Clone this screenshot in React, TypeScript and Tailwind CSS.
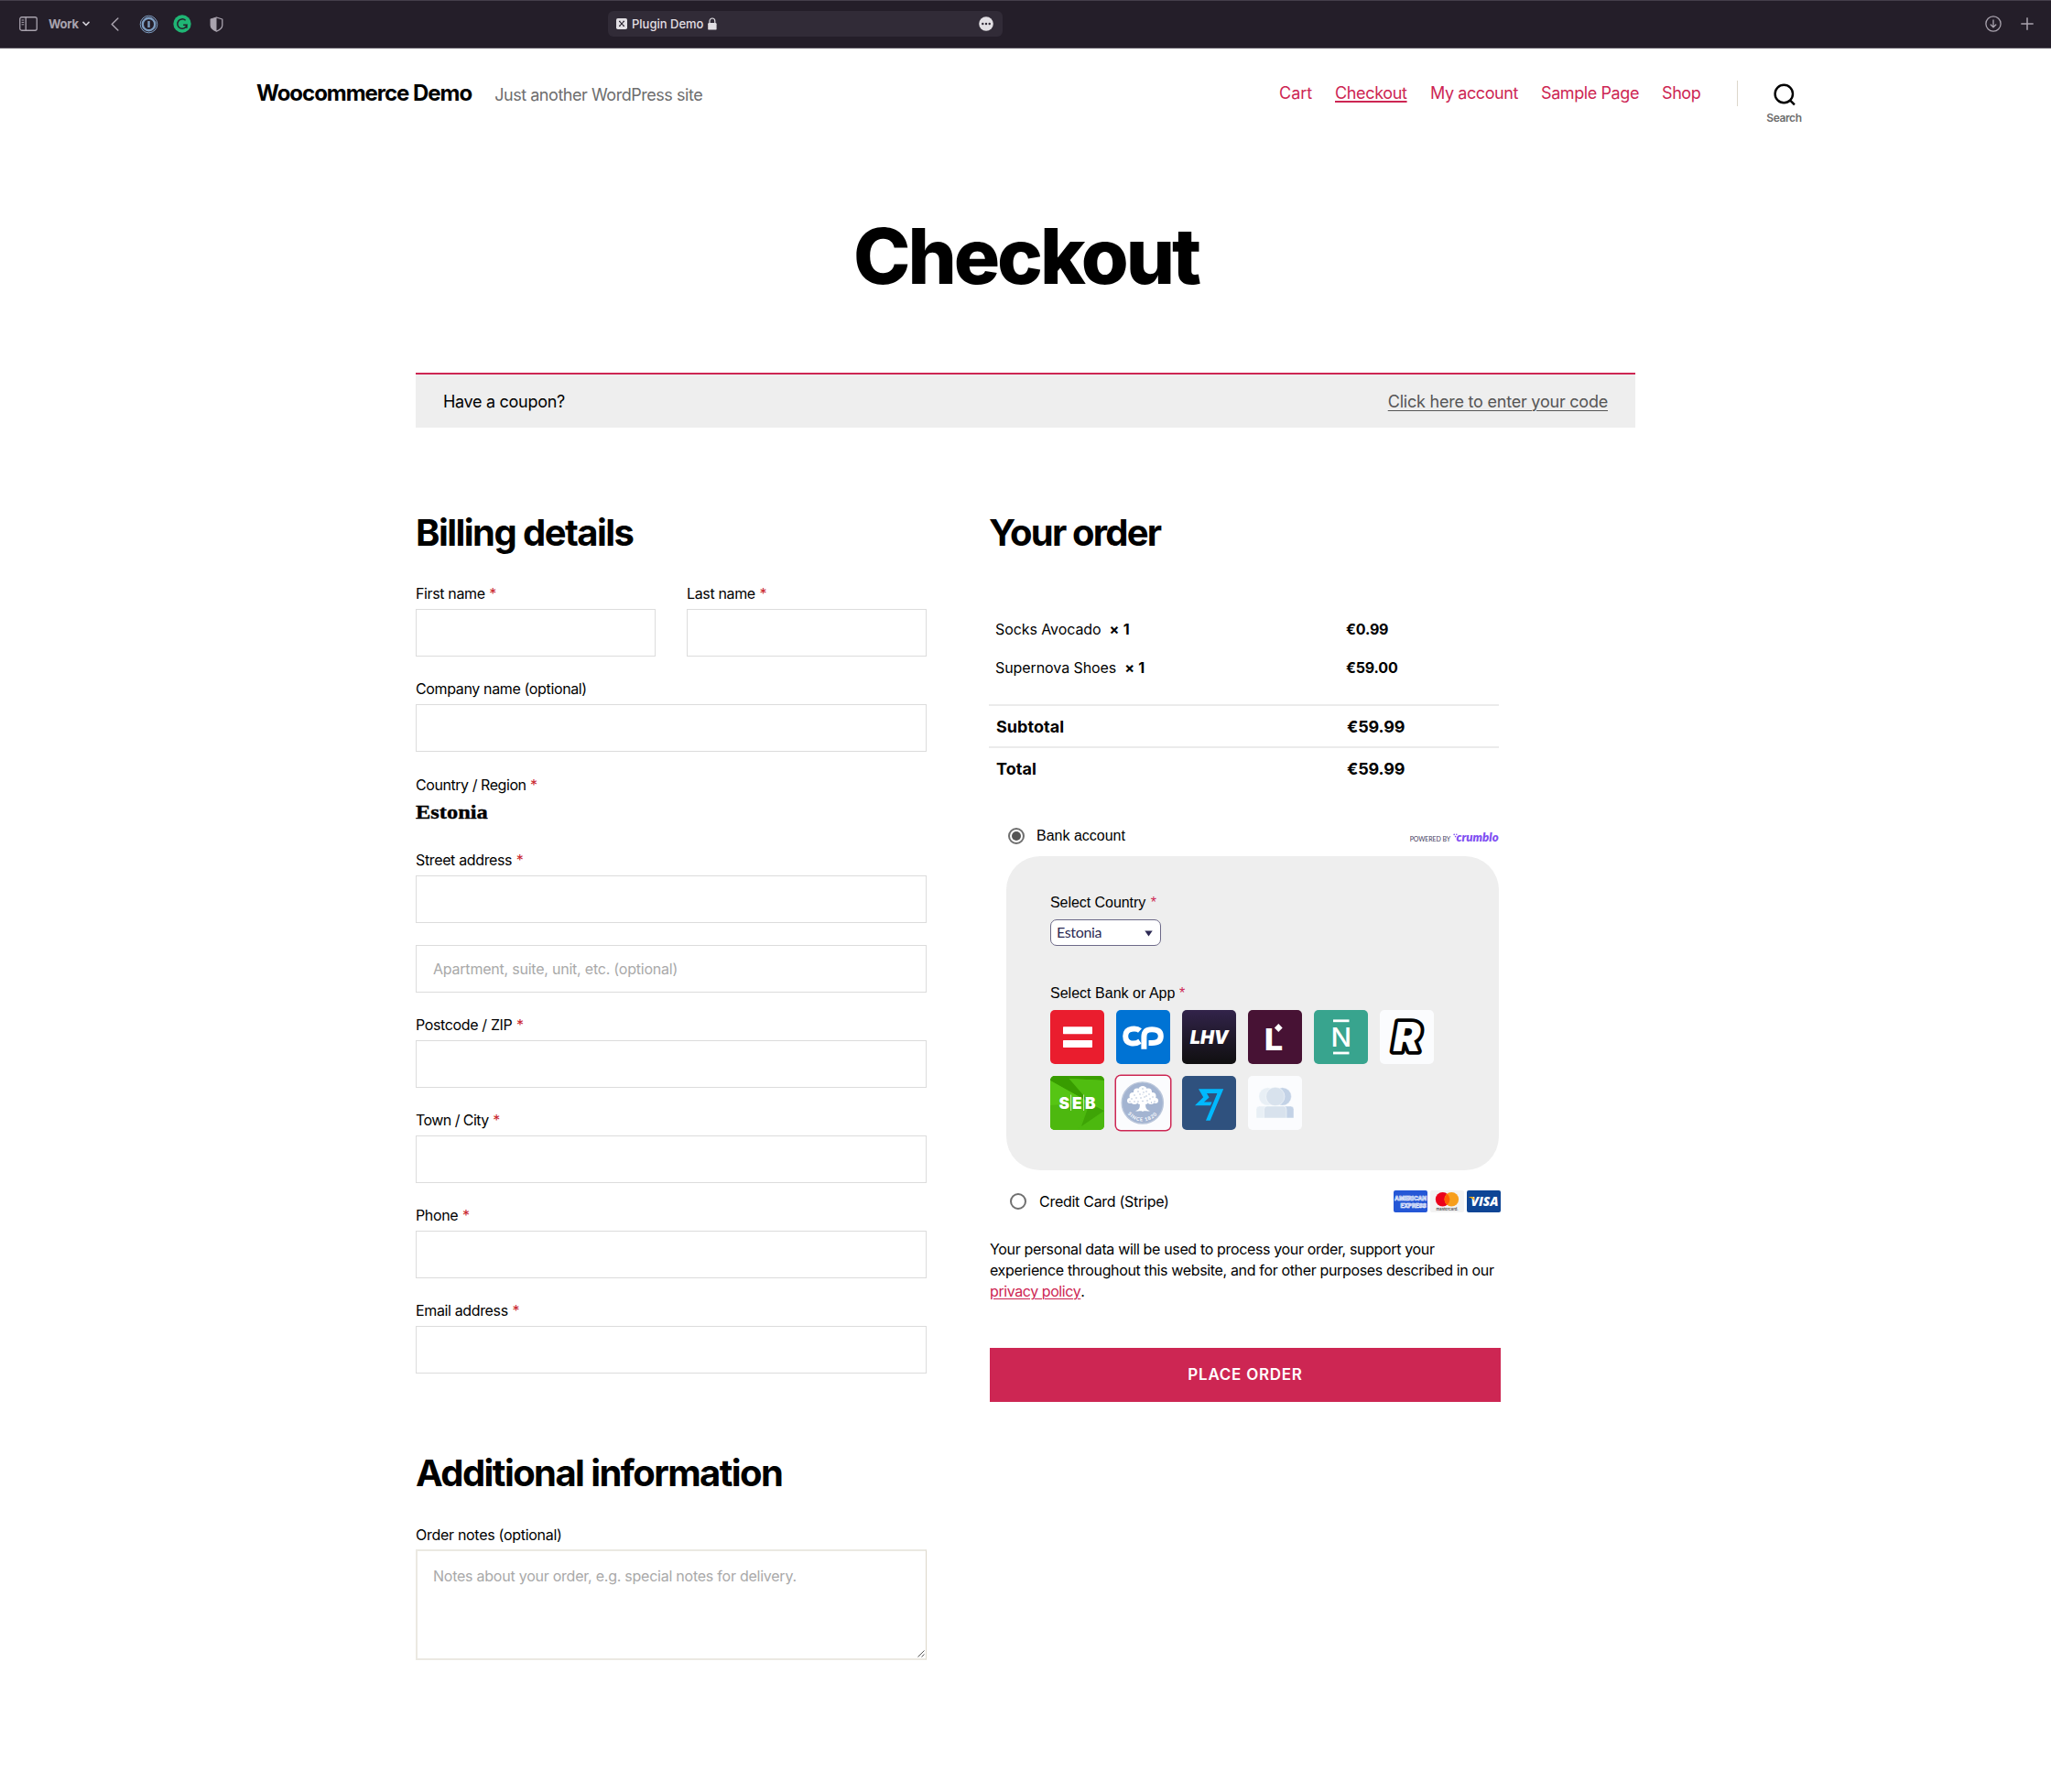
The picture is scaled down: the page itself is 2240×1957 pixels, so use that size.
import React from "react";

const Star = ({ className = "text-[#cd2653]" }: { className?: string }) => (
  <span className={className}>*</span>
);

function BrowserBar() {
  return (
    <div className="flex h-[53px] items-center border-t border-b border-t-[#443e4a] border-b-[#5d5862] bg-[#241e29] pb-px text-[#a9a3ae]">
      <svg className="ml-[21px]" width="20" height="16" viewBox="0 0 20 16" fill="none" stroke="currentColor">
        <rect x="0.75" y="0.75" width="18.5" height="14.5" rx="2" strokeWidth="1.3" />
        <path d="M7.2 1V15" strokeWidth="1.3" />
        <path d="M2.6 4H5.2M2.6 6.4H5.2M2.6 8.8H5.2" strokeWidth="1" />
      </svg>
      <span className="ml-[12px] w-[37px] text-[13px] leading-[20px] font-bold tracking-[-0.3px]">Work</span>
      <svg width="8" height="6" viewBox="0 0 8 6" fill="none" stroke="#d0ccd4" strokeWidth="1.6" strokeLinecap="round" strokeLinejoin="round">
        <path d="M1 1.4L4 4.5L7 1.4" />
      </svg>
      <svg className="ml-[23px]" width="9" height="15" viewBox="0 0 9 15" fill="none" stroke="currentColor" strokeWidth="1.5" strokeLinecap="round" strokeLinejoin="round">
        <path d="M7.8 1L1.2 7.5L7.8 14" />
      </svg>
      <svg className="ml-[22px]" width="21" height="21" viewBox="0 0 21 21" fill="none" stroke="#7d9cc0">
        <circle cx="10.5" cy="10.5" r="9.3" strokeWidth="1" />
        <circle cx="10.5" cy="10.5" r="6.7" strokeWidth="2.4" />
        <path d="M10.5 7V14" strokeWidth="2.4" />
      </svg>
      <svg className="ml-[16px]" width="20" height="20" viewBox="0 0 20 20" fill="none">
        <circle cx="10" cy="10" r="9.7" fill="#1fb574" />
        <path d="M13.6 6.3A5.2 5.2 0 1 0 15.1 11.2H11.2M14.9 11V14.8" stroke="#241e29" strokeWidth="1.5" />
      </svg>
      <svg className="ml-[20px]" width="15" height="17" viewBox="0 0 15 17" fill="none">
        <path d="M7.5 1L13.8 3V9.5C13.8 12.5 10.6 14.8 7.5 16.2C4.4 14.8 1.2 12.5 1.2 9.5V3Z" stroke="currentColor" strokeWidth="1.3" strokeLinejoin="round" />
        <path d="M7.5 1V16.2C4.4 14.8 1.2 12.5 1.2 9.5V3Z" fill="currentColor" />
      </svg>
      <div className="ml-[420px] flex h-[28px] w-[431px] items-center rounded-[6px] bg-[#312b37] pl-[9px] text-[#e2dfe4]">
        <svg width="12" height="12" viewBox="0 0 12 12">
          <rect width="12" height="12" rx="1.8" fill="currentColor" />
          <path d="M3.6 3.4L8.4 8.4M8.4 3.4L3.6 8.4M3 3.4H4.6M7.4 3.4H9M3 8.4H4.6M7.4 8.4H9" stroke="#312b37" strokeWidth="1.1" />
        </svg>
        <span className="ml-[5px] w-[83px] whitespace-nowrap text-[13px] leading-[20px] font-medium">Plugin Demo</span>
        <svg width="10" height="14" viewBox="0 0 10 14" fill="none">
          <rect x="0.2" y="6" width="9.4" height="7.6" rx="1.2" fill="currentColor" />
          <path d="M2 6.5V4A2.9 3 0 0 1 7.8 4V6.5" stroke="currentColor" strokeWidth="1.2" />
        </svg>
        <svg className="mr-[10px] ml-auto" width="16" height="16" viewBox="0 0 16 16">
          <circle cx="8" cy="8" r="7.8" fill="currentColor" />
          <g fill="#312b37">
            <circle cx="4.3" cy="8" r="1.2" />
            <circle cx="8" cy="8" r="1.2" />
            <circle cx="11.7" cy="8" r="1.2" />
          </g>
        </svg>
      </div>
      <svg className="ml-auto" width="18" height="18" viewBox="0 0 18 18" fill="none" stroke="currentColor" strokeWidth="1.3" strokeLinecap="round" strokeLinejoin="round">
        <circle cx="9" cy="9" r="8.1" />
        <path d="M9 5V12.6M6.2 10L9 12.8L11.8 10" />
      </svg>
      <svg className="mr-[19px] ml-[21px]" width="14" height="14" viewBox="0 0 14 14" stroke="currentColor" strokeWidth="1.5">
        <path d="M7 0.3V13.7M0.3 7H13.7" />
      </svg>
    </div>
  );
}

function Header() {
  return (
    <header className="flex h-[177px] pl-[280px]">
      <div className="flex w-[1117px] items-baseline pt-[33px]">
        <div className="text-[24px] leading-[32px] font-bold tracking-[-1.03px] whitespace-nowrap">Woocommerce Demo</div>
        <div className="ml-[25px] text-[18px] tracking-[-0.46px] whitespace-nowrap text-[#6d6d6d]">Just another WordPress site</div>
      </div>
      <nav className="flex w-[500px] pt-[37px] text-[18px] leading-[24px] tracking-[-0.41px] whitespace-nowrap text-[#cd2653]">
        <a className="w-[61px] tracking-[0px]">Cart</a>
        <a className="w-[104px] underline decoration-[1.5px] underline-offset-[2px] tracking-[-0.35px]">Checkout</a>
        <a className="w-[121px]">My account</a>
        <a className="w-[132px]">Sample Page</a>
        <a>Shop</a>
      </nav>
      <div className="mt-[35px] h-[28px] w-px bg-[#dcd7ca]" />
      <div className="ml-[29px] flex w-[43px] flex-col items-center pt-[38px]">
        <svg width="24" height="25" viewBox="0 0 24 25" fill="none" stroke="#000" strokeWidth="2.4">
          <circle cx="11.3" cy="11.5" r="9.7" />
          <path d="M17.9 18.4L22.9 23.4" />
        </svg>
        <span className="mt-[5px] text-[12px] leading-[16px] font-semibold tracking-[-0.4px] text-[#6d6d6d]">Search</span>
      </div>
    </header>
  );
}

function Field({ label, required, className = "mt-[23px]", tracking = "tracking-[-0.36px]" }: { label: string; required?: boolean; className?: string; tracking?: string }) {
  return (
    <div className={className}>
      <label className={`block text-[16px] leading-[24px] whitespace-nowrap ${tracking}`}>
        {label} {required && <Star className="ml-[0.5px] text-[#c9252d]" />}
      </label>
      <div className="mt-[5px] h-[52px] border border-[#dcdcdc]" />
    </div>
  );
}

function Billing() {
  return (
    <section className="w-[558px]">
      <h2 className="text-[40px] leading-[48px] font-bold tracking-[-1.55px]">Billing details</h2>
      <div className="mt-[30px] grid grid-cols-2 gap-[34px]">
        <Field label="First name" required className="" />
        <Field label="Last name" required className="" />
      </div>
      <Field label="Company name (optional)" />
      <div className="mt-[24px] text-[16px] leading-[24px] tracking-[-0.44px]">
        Country / Region <Star className="ml-[0.5px] text-[#c9252d]" />
      </div>
      <div className="mt-[4px] w-fit origin-left scale-x-[1.11] font-['Liberation_Serif',serif] text-[22px] leading-[28px] font-bold [-webkit-text-stroke:0.4px_#000]">Estonia</div>
      <Field label="Street address" required className="mt-[26px]" />
      <div className="mt-[24px] flex h-[52px] items-center border border-[#dcdcdc] pl-[18px] text-[16px] tracking-[-0.22px] text-[#a9a9a9]">
        Apartment, suite, unit, etc. (optional)
      </div>
      <Field label="Postcode / ZIP" required />
      <Field label="Town / City" required tracking="tracking-[-0.55px]" />
      <Field label="Phone" required />
      <Field label="Email address" required />
      <h2 className="mt-[85px] text-[40px] leading-[48px] font-bold tracking-[-1.59px] whitespace-nowrap">Additional information</h2>
      <label className="mt-[31px] block text-[16px] leading-[24px] tracking-[-0.29px]">Order notes (optional)</label>
      <div className="relative mt-[4px] h-[121px] border-2 border-r border-[#ebe9e2] border-r-[#dcd7ca] pt-[15px] pl-[17px] text-[16px] leading-[24px] tracking-[-0.24px] text-[#a9a9a9]">
        Notes about your order, e.g. special notes for delivery.
        <svg className="absolute right-[1px] bottom-[1px]" width="8" height="8" viewBox="0 0 8 8" stroke="#555" strokeWidth="1">
          <path d="M0.5 7.5L7.5 0.5M4.5 7.5L7.5 4.5" />
        </svg>
      </div>
    </section>
  );
}

const Tile = ({ children, className = "" }: { children: React.ReactNode; className?: string }) => (
  <svg className={`rounded-[5px] ${className}`} width="59" height="59" viewBox="0 0 59 59">
    {children}
  </svg>
);

const foliage: [number, number, number][] = [
  [29, 15.5, 4.6], [23, 17.5, 4], [35, 17.5, 4], [18.5, 22, 4], [39.5, 22, 4], [15, 27, 3], [43, 27, 3], [24, 22, 5], [34, 22, 5], [20, 27.5, 3.6], [38, 27.5, 3.6], [29, 25, 4.5], [26, 28, 3], [32, 28, 3],
];
const leaves: [number, number][] = [
  [24, 17], [29, 14], [33, 17], [36, 20], [20, 21], [26, 20], [30, 18], [33, 22], [40, 23], [17, 25], [22, 24], [27, 24], [31, 23], [37, 25], [15, 28], [20, 28], [24, 28], [34, 27], [42, 28], [29, 27.5], [38.5, 29],
];

function Banks() {
  return (
    <div className="mt-[6px] grid w-fit grid-cols-[repeat(6,59px)] gap-[13px]">
      <Tile className="bg-[#ea1d2e]">
        <rect x="14" y="18.3" width="32" height="7.9" rx="0.6" fill="#fff" />
        <rect x="14" y="33" width="32" height="7.9" rx="0.6" fill="#fff" />
      </Tile>
      <Tile className="bg-[#0073d4]">
        <g fill="none" stroke="#fff" strokeWidth="6">
          <path d="M26 22.6C23 20 10.2 18.4 10.2 28.6C10.2 38.4 21 37.6 26 34.2" />
          <path d="M30.4 42.8V29.5C30.4 22.7 34 21.2 39 21.2C44.5 21.2 48.8 22.8 48.8 28.6C48.8 34.2 44.5 36.1 39 36.1H35.5" />
        </g>
      </Tile>
      <Tile className="bg-linear-to-b from-[#32234a] to-[#100f10]">
        <text x="8.7" y="36.8" textLength="42" lengthAdjust="spacingAndGlyphs" fill="#fff" fontFamily="Inter" fontWeight="900" fontStyle="italic" fontSize="20">LHV</text>
      </Tile>
      <Tile className="bg-[#471234]">
        <text x="17.8" y="44" textLength="20.5" lengthAdjust="spacingAndGlyphs" fill="#fff" fontFamily="Inter" fontWeight="800" fontSize="33">L</text>
        <rect x="30.2" y="16.4" width="6.2" height="6.2" transform="rotate(45 33.3 19.5)" fill="#fff" />
      </Tile>
      <Tile className="bg-[#38a48e]">
        <rect x="21" y="10.4" width="17.5" height="2.8" fill="#fff" />
        <rect x="21" y="45.6" width="17.5" height="2.8" fill="#fff" />
        <text x="18.5" y="40" textLength="22.6" lengthAdjust="spacingAndGlyphs" fill="#fff" fontFamily="Inter" fontWeight="500" fontSize="29">N</text>
      </Tile>
      <Tile className="bg-[#fbfcfe]">
        <text x="14.5" y="45" textLength="30" lengthAdjust="spacingAndGlyphs" fill="#fff" stroke="#000" strokeWidth="7.6" strokeLinejoin="round" paintOrder="stroke" fontFamily="Inter" fontWeight="900" fontStyle="italic" fontSize="44">R</text>
      </Tile>
      <Tile className="bg-linear-to-tr from-[#41a80a] to-[#5fce18]">
        <path d="M0 0H59V5L20 3Z" fill="#3a9e00" />
        <path d="M20 3L59 5V37L42 27Z" fill="#50bd10" />
        <path d="M0 0H18L44 30L0 5Z" fill="#389c00" />
        <path d="M0 5L43 29L30 59H0Z" fill="#56c514" />
        <path d="M0 32L43 29L30 59H0Z" fill="#4db80f" />
        <path d="M43 30L59 38V59H30Z" fill="#4cb80f" />
        <path d="M43 30L59 38L34 55Z" fill="#3ea406" />
        <g fill="#fff" fontFamily="Inter" fontWeight="900" fontSize="17.2">
          <text x="9.4" y="35.8">S</text>
          <text x="24" y="35.8">E</text>
          <text x="38" y="35.8">B</text>
        </g>
        <path d="M22.6 20.5V38M36.6 20.5V38" stroke="#d3f0c0" strokeWidth="0.9" />
      </Tile>
      <Tile className="bg-[#fbfcfe] shadow-[0_0_0_1.5px_#cd2653]">
        <circle cx="28.8" cy="29.5" r="22.6" fill="#a3b4d1" stroke="#bac6da" strokeWidth="1.4" />
        <g fill="#fff">
          {foliage.map(([x, y, r], i) => <circle key={i} cx={x} cy={y} r={r} />)}
          <path d="M26 29H32L32.3 34C33 36.5 34.5 37.4 37 38.2C33 38.8 31 37.8 29 39C27 37.8 25 38.8 21 38.2C23.5 37.4 25.2 36.5 25.7 34Z" />
        </g>
        <g fill="#a3b4d1">
          {leaves.map(([x, y], i) => <circle key={i} cx={x} cy={y} r="0.7" />)}
        </g>
        <path id="seal-arc" d="M9.6 36A20.4 20.4 0 0 0 48 36" fill="none" />
        <text fill="#fff" fontFamily="Lato" fontWeight="700" fontSize="5.4" letterSpacing="0.8">
          <textPath href="#seal-arc" startOffset="50%" textAnchor="middle">SINCE 1820</textPath>
        </text>
      </Tile>
      <Tile className="bg-[#2f517e]">
        <path d="M18 14.3H45.2L30.7 48.7H26L38.4 19H27L29.6 23.4L24 28.4H32.6L31 32.3H14L23.2 23.2Z" fill="#00b9ff" />
      </Tile>
      <Tile className="bg-[#fbfcfe]">
        <g stroke="#fbfcfe" strokeWidth="0.5">
          <circle cx="37.6" cy="22.5" r="9.8" fill="#c3d2e6" />
          <path d="M28 46V36Q28 33 31 33H46.5Q50 33 50 36.5V46Z" fill="#c3d2e6" />
          <circle cx="21.6" cy="22.5" r="9.8" fill="#e8eff5" />
          <path d="M9 46V36.5Q9 33 12.5 33H28V46Z" fill="#e8eff5" />
          <circle cx="29.8" cy="22.5" r="10.2" fill="#d8e2ed" />
          <path d="M17.5 46V36.5Q17.5 33 21 33H38.5Q42 33 42 36.5V46Z" fill="#d8e2ed" />
        </g>
      </Tile>
    </div>
  );
}

function Cards() {
  return (
    <div className="flex gap-[3px]">
      <svg className="overflow-visible rounded-[2px] bg-[#2557d6]" width="37" height="24" viewBox="0 0 37 24">
        <g fill="#7896e8" stroke="#fff" strokeWidth="0.5" fontFamily="Inter" fontWeight="800">
          <text x="1" y="10.8" fontSize="6.4">AMERICAN</text>
          <text x="7.4" y="18.6" fontSize="6.2">EXPRESS</text>
        </g>
      </svg>
      <svg className="rounded-[2px] bg-[#f3f3f3]" width="37" height="24" viewBox="0 0 37 24">
        <circle cx="13.6" cy="9.8" r="7.8" fill="#eb001b" />
        <circle cx="23.3" cy="9.8" r="7.8" fill="#f79e1b" />
        <path d="M18.45 3.7A7.8 7.8 0 0 1 18.45 15.9A7.8 7.8 0 0 1 18.45 3.7Z" fill="#ff5f00" />
        <text x="6.6" y="21.6" textLength="24" lengthAdjust="spacingAndGlyphs" fill="#333" fontFamily="Inter" fontWeight="500" fontSize="4.4">mastercard.</text>
      </svg>
      <svg className="rounded-[2px] bg-[#0e4595]" width="37" height="24" viewBox="0 0 37 24">
        <text x="4.6" y="17" textLength="30" lengthAdjust="spacingAndGlyphs" fill="#fff" fontFamily="Open Sans" fontWeight="800" fontStyle="italic" fontSize="14">VISA</text>
        <path d="M2.4 7H6.2Q7.3 7 7.6 8.2L8.6 12.2Q7 8.4 2.4 7.4Z" fill="#f2ae14" />
      </svg>
    </div>
  );
}

function Order() {
  const items = [
    { name: "Socks Avocado", price: "€0.99" },
    { name: "Supernova Shoes", price: "€59.00" },
  ];
  return (
    <section className="ml-[68px] w-[560px]">
      <h2 className="text-[40px] leading-[48px] font-bold tracking-[-1.8px]">Your order</h2>
      <div className="mt-[69px] flex flex-col gap-[18px] pl-[7px] text-[16px] leading-[24px]">
        {items.map((i) => (
          <div key={i.name} className="flex">
            <div className="w-[383px] tracking-[-0.08px]">
              {i.name}<span className="ml-[9px] font-bold tracking-[0.2px]">× 1</span>
            </div>
            <div className="font-bold tracking-[-0.17px]">{i.price}</div>
          </div>
        ))}
      </div>
      <div className="mt-[28px] w-[557px] text-[18px] leading-[24px] font-bold">
        {["Subtotal", "Total"].map((t) => (
          <div key={t} className="flex border-t-2 border-[#ebebeb] pt-[11px] pb-[9px] pl-[8px]">
            <div className="w-[383px] tracking-[0.05px]">{t}</div>
            <div className="tracking-[-0.15px]">€59.99</div>
          </div>
        ))}
      </div>

      <div className="mt-[40px] flex w-[557px] items-center pl-[21px] font-['Liberation_Sans',sans-serif] text-[16px] leading-[24px]">
        <span className="flex size-[18px] items-center justify-center rounded-full border-2 border-[#6f6f6f]">
          <span className="size-[10px] rounded-full bg-[#555]" />
        </span>
        <span className="ml-[13px]">Bank account</span>
        <span className="ml-auto pt-[5px] font-['Lato',sans-serif] text-[7px] leading-[12px] tracking-[-0.1px] text-[#3d3a5c]">POWERED BY</span>
        <svg className="mt-[3px] ml-[3px]" width="50" height="16" viewBox="0 0 50 16" fill="#7f4ff2">
          <circle cx="1.2" cy="4.4" r="0.8" />
          <circle cx="3.8" cy="4.2" r="0.8" />
          <circle cx="2.6" cy="6.6" r="0.8" />
          <text x="3.6" y="11.8" textLength="46" lengthAdjust="spacingAndGlyphs" fontFamily="Lato" fontWeight="800" fontStyle="italic" fontSize="12.4">crumblo</text>
        </svg>
      </div>

      <div className="mt-[10px] ml-[19px] h-[343px] w-[538px] rounded-[37px] bg-[#eee] pt-[39px] pl-[48px] font-['Liberation_Sans',sans-serif] text-[16px] leading-[24px]">
        <div className="tracking-[-0.05px]">Select Country <Star className="ml-px text-[#cd2653]" /></div>
        <div className="mt-[6px] flex h-[29px] w-[121px] items-center rounded-[7px] border border-[#6c6988] bg-white pr-[8px] pb-px pl-[6px] font-['Lato',sans-serif] tracking-[-0.34px] text-[#2d2a54]">
          Estonia
          <svg className="mt-[2px] ml-auto" width="9" height="7" viewBox="0 0 9 7"><path d="M0.3 0.5H8.7L4.5 6.5Z" fill="#2d2a54" /></svg>
        </div>
        <div className="mt-[40px] tracking-[0.02px]">Select Bank or App <Star className="text-[#cd2653]" /></div>
        <Banks />
      </div>

      <div className="mt-[22px] flex h-[24px] w-[559px] items-center pl-[23px] text-[16px]">
        <span className="size-[18px] rounded-full border-2 border-[#6f6f6f]" />
        <span className="mr-auto ml-[14px] tracking-[-0.28px]">Credit Card (Stripe)</span>
        <Cards />
      </div>

      <p className="mt-[29px] pl-[1px] text-[16px] leading-[23px] tracking-[-0.35px] whitespace-nowrap">
        Your personal data will be used to process your order, support your<br />
        experience throughout this website, and for other purposes described in our<br />
        <a className="tracking-[-0.42px] text-[#cd2653] underline decoration-1 underline-offset-[2px]">privacy policy</a>.
      </p>
      <button className="mt-[50px] ml-[1px] block h-[59px] w-[558px] bg-[#cd2653] text-center text-[17px] font-semibold tracking-[0.74px] text-white">
        PLACE ORDER
      </button>
    </section>
  );
}

export default function App() {
  return (
    <div className="h-[1957px] w-[2240px] overflow-hidden bg-white font-['Inter',sans-serif] text-black">
      <BrowserBar />
      <Header />
      <main className="pl-[454px]">
        <h1 className="ml-[478px] text-[84px] leading-[100px] font-extrabold tracking-[-3.08px]">Checkout</h1>
        <div className="mt-[77px] flex h-[60px] w-[1332px] items-center justify-between border-t-2 border-[#cd2653] bg-[#eee] pr-[30px] pl-[30px] text-[18px]">
          <span className="tracking-[-0.3px]">Have a coupon?</span>
          <a className="tracking-[-0.22px] text-[#555] underline decoration-1 underline-offset-[3px]">Click here to enter your code</a>
        </div>
        <div className="mt-[91px] flex">
          <Billing />
          <Order />
        </div>
      </main>
    </div>
  );
}
